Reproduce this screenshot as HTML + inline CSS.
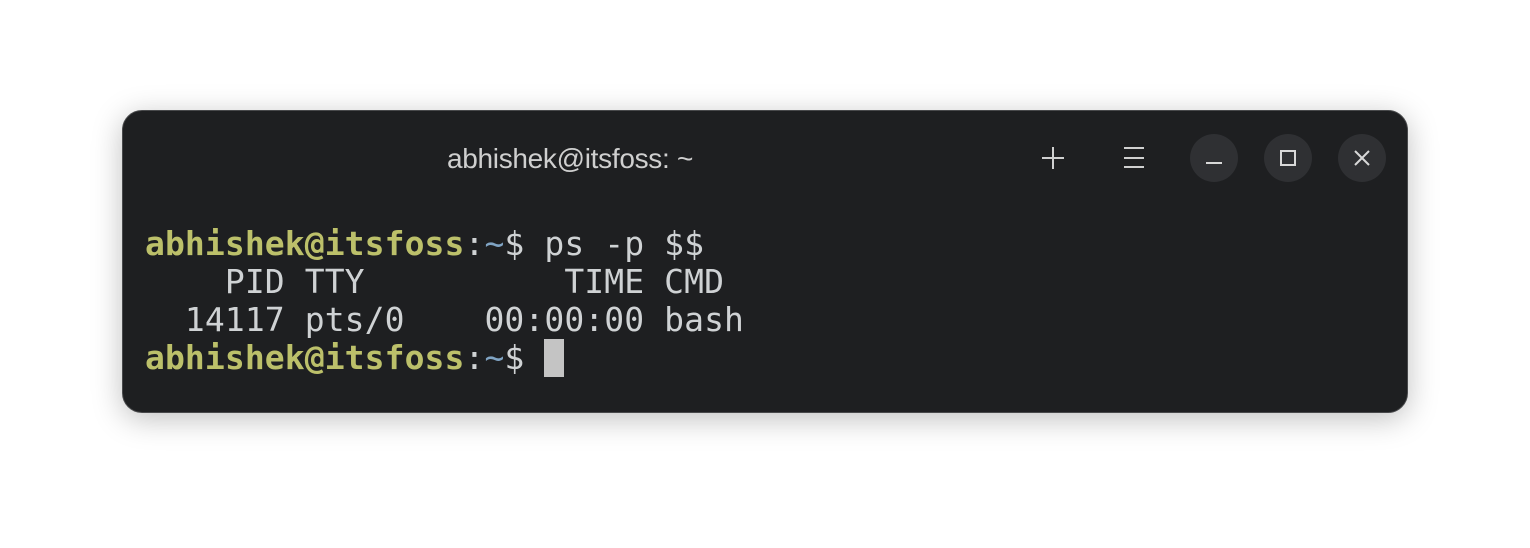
<!DOCTYPE html>
<html><head><style>
body{margin:0;width:1530px;height:548px;background:#fff;overflow:hidden;position:relative;font-family:"Liberation Sans",sans-serif}
.win{position:absolute;left:122px;top:110px;width:1284px;height:301px;background:#1e1f21;border:1px solid #48494b;border-radius:20px;box-shadow:0 6px 30px rgba(0,0,0,.25)}
.title{position:absolute;left:0;width:1140px;top:143px;text-align:center;color:#cfcfcf;font-size:28px;letter-spacing:-0.3px}
.btn{position:absolute;top:134px;width:48px;height:48px;border-radius:50%;background:#2f3033}
.term{position:absolute;left:145px;top:225px;font-family:"DejaVu Sans Mono","Liberation Mono",monospace;font-size:33px;letter-spacing:0.1px;line-height:38px;color:#cfd2d4;white-space:pre}
.g{color:#bcc06a;font-weight:bold}.b{color:#80a4c4}
.cur{display:inline-block;width:20px;height:38px;background:#c4c4c4;vertical-align:top}
</style></head><body>
<div class="win"></div>
<div class="title">abhishek@itsfoss: ~</div>
<svg style="position:absolute;left:0;top:0" width="1530" height="548">
<g stroke="#d0d0d0" stroke-width="2" fill="none">
<path d="M1042 158H1064M1053 147V169"/>
<path d="M1124 148H1144M1124 158H1144M1124 167H1144"/>
</g></svg>
<div class="btn" style="left:1190px"></div>
<div class="btn" style="left:1264px"></div>
<div class="btn" style="left:1338px"></div>
<svg style="position:absolute;left:0;top:0" width="1530" height="548">
<g stroke="#d8d8d8" stroke-width="2" fill="none">
<path d="M1206 163H1222"/>
<rect x="1281" y="151" width="14" height="14"/>
<path d="M1355 151L1369 165M1369 151L1355 165"/>
</g></svg>
<div class="term"><span class="g">abhishek@itsfoss</span>:<span class="b">~</span>$ ps -p $$
    PID TTY          TIME CMD
  14117 pts/0    00:00:00 bash
<span class="g">abhishek@itsfoss</span>:<span class="b">~</span>$ <span class="cur"></span></div>
</body></html>
